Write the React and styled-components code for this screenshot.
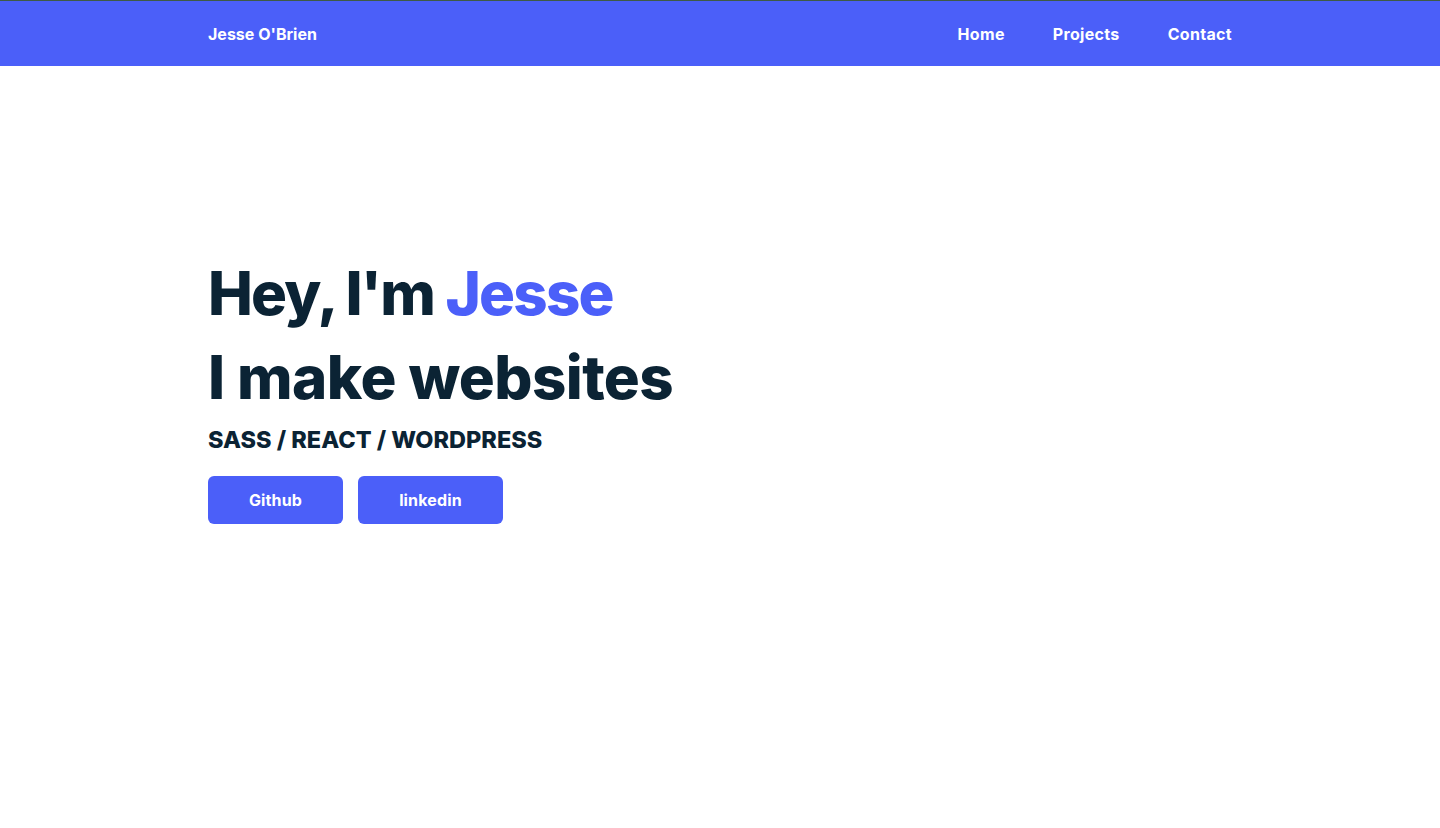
import React from 'react';
import styled, { createGlobalStyle } from 'styled-components';

const GlobalStyle = createGlobalStyle`
  * { box-sizing: border-box; }
  html, body {
    margin: 0;
    padding: 0;
    background: #ffffff;
    font-family: 'Inter', 'Open Sans', sans-serif;
  }
`;

const Nav = styled.nav`
  height: 66px;
  background: #4b5ff9;
  border-top: 1px solid #3e5a45;
  display: flex;
  justify-content: center;
`;

const NavContainer = styled.div`
  width: 1024px;
  display: flex;
  align-items: center;
  justify-content: space-between;
`;

const Logo = styled.a`
  color: #ffffff;
  font-size: 16px;
  font-weight: 700;
  text-decoration: none;
`;

const NavLinks = styled.ul`
  display: flex;
  gap: 48px;
  list-style: none;
  margin: 0;
  padding: 0;

  a {
    color: #ffffff;
    font-size: 16px;
    font-weight: 700;
    letter-spacing: 0.02em;
    text-decoration: none;
  }
`;

const Hero = styled.section`
  display: flex;
  justify-content: center;
  padding-top: 185px;
`;

const HeroInner = styled.div`
  width: 1024px;
`;

const Title = styled.h1`
  margin: 0;
  font-size: 60px;
  line-height: 84px;
  font-weight: 800;
  color: #0b2334;
  letter-spacing: ${({ $tight }) => ($tight ? '-0.03em' : '-0.01em')};
`;

const Accent = styled.span`
  color: #4b5ff9;
`;

const Stack = styled.h3`
  margin: 6px 0 0;
  font-size: 23.5px;
  font-weight: 800;
  color: #0b2334;
`;

const Buttons = styled.div`
  display: flex;
  gap: 15px;
  margin-top: 22px;
`;

const Button = styled.a`
  display: flex;
  align-items: center;
  justify-content: center;
  width: ${({ $w }) => $w}px;
  height: 48px;
  border-radius: 6px;
  background: #4b5ff9;
  color: #ffffff;
  font-size: 16px;
  font-weight: 700;
  letter-spacing: 0.01em;
  text-decoration: none;
`;

const links = ['Home', 'Projects', 'Contact'];

export default function App() {
  return (
    <>
      <GlobalStyle />
      <Nav>
        <NavContainer>
          <Logo href="#">Jesse O'Brien</Logo>
          <NavLinks>
            {links.map(l => (
              <li key={l}><a href="#">{l}</a></li>
            ))}
          </NavLinks>
        </NavContainer>
      </Nav>
      <Hero>
        <HeroInner>
          <Title $tight>Hey, I'm <Accent>Jesse</Accent></Title>
          <Title>I make websites</Title>
          <Stack>SASS / REACT / WORDPRESS</Stack>
          <Buttons>
            <Button href="#" $w={135}>Github</Button>
            <Button href="#" $w={145}>linkedin</Button>
          </Buttons>
        </HeroInner>
      </Hero>
    </>
  );
}
